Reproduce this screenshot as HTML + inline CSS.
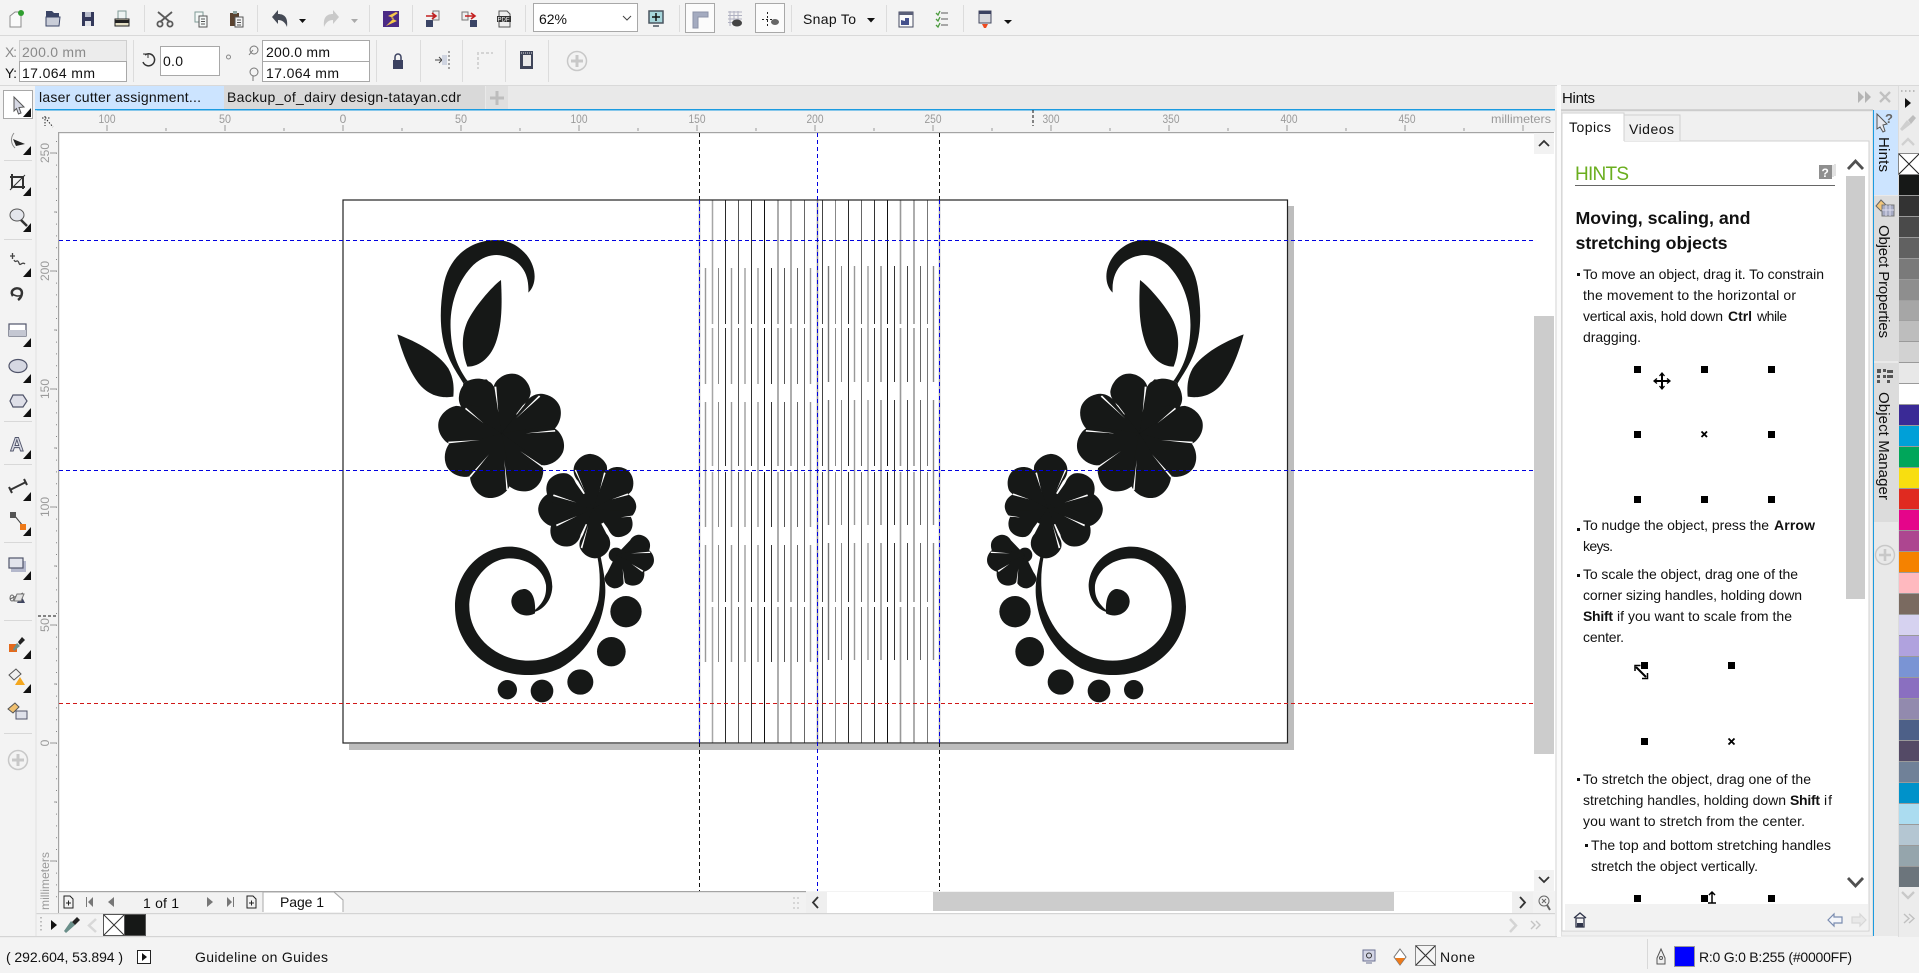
<!DOCTYPE html>
<html><head><meta charset="utf-8"><title>CorelDRAW</title>
<style>
html,body{margin:0;padding:0;background:#f3f3f3;width:1919px;height:973px;overflow:hidden}
svg{display:block;position:absolute;left:0;top:0}
text{font-family:"Liberation Sans",sans-serif;fill:#111;font-size:14px}
.r{font-size:12px;fill:#9a9a9a}
.b{font-weight:bold}
.ic{fill:none;stroke:#555a66;stroke-width:1.3}
</style></head><body>
<svg width="1919" height="973" viewBox="0 0 1919 973" xmlns="http://www.w3.org/2000/svg">
<defs>
<path id="pt" d="M0 0L100 -45C120 -62 150 -62 168 -46C188 -30 194 -8 192 8C188 32 170 52 148 60C125 64 112 52 100 45Z"/>
<g id="orn" fill="#161817">
 <g transform="translate(380 220) scale(.33333)">
  <path d="M445 218C470 195 472 145 440 105C405 65 370 60 345 60C270 62 205 110 190 200C178 270 178 350 205 410C220 445 235 465 250 490L262 482C235 445 215 400 212 330C208 250 235 180 280 135C305 112 330 105 350 105C400 108 450 140 445 218Z"/>
  <path d="M363 180C367 260 365 310 350 360C335 410 300 440 262 440C245 395 243 350 262 305C280 265 335 200 363 180Z"/>
  <path d="M52 343C110 365 175 400 205 445C222 475 222 505 220 530C190 535 150 530 120 495C90 460 65 395 52 343Z"/>
  <g transform="translate(365 640)">
   <circle r="72"/>
   <use href="#pt" transform="rotate(-77) scale(.95)"/>
   <use href="#pt" transform="rotate(-27)"/>
   <use href="#pt" transform="rotate(15)"/>
   <use href="#pt" transform="rotate(60)"/>
   <use href="#pt" transform="rotate(103) scale(1.03)"/>
   <use href="#pt" transform="rotate(147)"/>
   <use href="#pt" transform="rotate(189)"/>
   <use href="#pt" transform="rotate(-124) scale(.97)"/>
  </g>
  <path d="M250 490L245 525L262 555L300 560L340 500L320 478L262 482Z"/>
  <g fill="#fff">
   <path d="M355 578L343 500L349 500Z"/>
   <path d="M408 595L477 526L481 530Z"/>
   <path d="M437 640L525 630L526 635Z"/>
   <path d="M420 693L496 743L493 747Z"/>
   <path d="M373 720L379 810L384 810Z"/>
   <path d="M327 703L268 768L272 772Z"/>
   <path d="M300 660L205 665L205 670Z"/>
   <path d="M311 610L258 563L255 567Z"/>
  </g>
 </g>
 <g transform="translate(430 440) scale(.33333)">
  <g transform="translate(490 205)">
   <circle r="52"/>
   <use href="#pt" transform="rotate(-95) scale(.85)"/>
   <use href="#pt" transform="rotate(-47) scale(.8)"/>
   <use href="#pt" transform="rotate(-4) scale(.67)"/>
   <use href="#pt" transform="rotate(30) scale(.68)"/>
   <use href="#pt" transform="rotate(87) scale(.78)"/>
   <use href="#pt" transform="rotate(140) scale(.8)"/>
   <use href="#pt" transform="rotate(178) scale(.86)"/>
   <use href="#pt" transform="rotate(-149) scale(.82)"/>
  </g>
  <g fill="#fff">
   <path d="M465 155L434 91L438 89Z"/>
   <path d="M510 148L522 97L527 99Z"/>
   <path d="M545 178L593 160L595 165Z"/>
   <path d="M572 232L610 226L611 230Z"/>
   <path d="M518 255L548 311L553 308Z"/>
   <path d="M475 255L452 323L457 325Z"/>
   <path d="M441 228L378 254L380 259Z"/>
   <path d="M440 188L371 163L369 168Z"/>
  </g>
  <g transform="translate(558 345)">
   <circle r="22"/>
   <use href="#pt" transform="rotate(-22) scale(.56)"/>
   <use href="#pt" transform="rotate(10) scale(.6)"/>
   <use href="#pt" transform="rotate(48) scale(.58)"/>
   <use href="#pt" transform="rotate(92) scale(.52)"/>
  </g>
  <g fill="#fff">
   <path d="M603 340L660 335L661 339Z"/>
   <path d="M605 372L637 396L640 392Z"/>
   <path d="M578 385L582 445L587 444Z"/>
  </g>
  <path d="M502 350L512 350C522 400 530 440 524 480C515 560 470 640 390 685C345 705 300 708 260 703C160 690 75 610 75 500C75 400 150 320 240 320C310 320 367 375 367 440C365 490 330 515 305 518C340 490 350 470 348 435C340 385 290 355 240 355C175 355 118 420 118 500C118 590 200 662 295 662C400 662 480 580 505 480C512 430 510 390 502 350Z"/>
  <path d="M315 520C280 538 245 515 244 485C244 460 265 447 285 447C305 450 318 475 315 520Z"/>
  <circle cx="588" cy="515" r="47"/>
  <ellipse cx="544" cy="635" rx="43" ry="44"/>
  <ellipse cx="451" cy="726" rx="39" ry="38"/>
  <circle cx="336" cy="753" r="34"/>
  <circle cx="232" cy="749" r="29"/>
 </g>
</g>
</defs>

<rect width="1919" height="973" fill="#f3f3f3"/>
<!-- toolbar lines -->
<rect x="0" y="35" width="1919" height="1" fill="#d9d9d9"/>
<rect x="0" y="85" width="1919" height="1" fill="#d9d9d9"/>

<!-- top toolbar separators -->
<g fill="#dcdcdc">
<rect x="144" y="5" width="1" height="27"/><rect x="257" y="5" width="1" height="27"/><rect x="369" y="5" width="1" height="27"/><rect x="412" y="5" width="1" height="27"/><rect x="525" y="5" width="1" height="27"/><rect x="679" y="5" width="1" height="27"/><rect x="791" y="5" width="1" height="27"/><rect x="886" y="5" width="1" height="27"/><rect x="963" y="5" width="1" height="27"/>
<rect x="133" y="40" width="1" height="42"/><rect x="376" y="40" width="1" height="42"/><rect x="420" y="40" width="1" height="42"/><rect x="462" y="40" width="1" height="42"/><rect x="505" y="40" width="1" height="42"/><rect x="548" y="40" width="1" height="42"/>
</g>
<!-- new -->
<g transform="translate(16 19)"><path d="M-6 -3L-1 -7H5V8H-6Z" fill="#fafafa" stroke="#8c8c8c"/><circle cx="5" cy="-6" r="3" fill="#2f9e2f"/></g>
<!-- open -->
<g transform="translate(53 19)"><path d="M-7 -8H-1L1 -6H6V-2H-7Z" fill="#3b4566"/><path d="M-7 -2H7L6 7H-7Z" fill="#c9cdd8" stroke="#3b4566"/></g>
<!-- save -->
<g transform="translate(88 19)"><path d="M-6 -7H6V7H-6Z" fill="#33385a"/><rect x="-3" y="-7" width="6" height="5" fill="#b9bdcc"/><rect x="-3" y="2" width="6" height="5" fill="#dfe1e8"/></g>
<!-- print -->
<g transform="translate(122 19)"><rect x="-4" y="-8" width="8" height="8" fill="#eef3f2" stroke="#7f9a96"/><rect x="-7" y="0" width="14" height="7" fill="#e4dfc4" stroke="#222"/><rect x="-7" y="1" width="14" height="3" fill="#222"/></g>
<!-- cut -->
<g transform="translate(165 19)" fill="none" stroke="#5a5a5a" stroke-width="1.8"><path d="M-7 -7L5 3M7 -7L-5 3"/><circle cx="-5" cy="5" r="2.6"/><circle cx="5" cy="5" r="2.6"/></g>
<!-- copy -->
<g transform="translate(201 19)" stroke="#7e9a95" fill="#f4f8f7"><rect x="-6" y="-7" width="8" height="10"/><rect x="-2" y="-3" width="8" height="11" stroke="#555"/><path d="M0 0H4M0 2.500H4M0 5H4" stroke="#555"/></g>
<!-- paste -->
<g transform="translate(236 19)"><rect x="-6" y="-6" width="9" height="13" fill="#5b4330"/><rect x="-3" y="-8" width="4" height="3" fill="#8fa39f"/><rect x="-1" y="-2" width="8" height="10" fill="#f4f4f4" stroke="#555"/><path d="M1 1H5M1 3.500H5M1 6H5" stroke="#555"/></g>
<!-- undo redo -->
<g transform="translate(280 19)" fill="#454a55"><path d="M-8 -2L-2 -9V-5C5 -5 8 -1 7 8C5 3 2 1 -2 1V5Z"/></g>
<path d="M299 19H306L302.500 23Z" fill="#111"/>
<g transform="translate(331 19) scale(-1 1)" fill="#c9c9c9"><path d="M-8 -2L-2 -9V-5C5 -5 8 -1 7 8C5 3 2 1 -2 1V5Z"/></g>
<path d="M351 19H358L354.500 23Z" fill="#aaa"/>
<!-- purple -->
<rect x="383" y="11" width="16" height="16" fill="#4b2a85"/><path d="M396 12L388 16L394 18L386 26L397 21L391 18L398 13Z" fill="#f5c84b"/>
<!-- import/export/pdf -->
<g transform="translate(433 19)"><rect x="-7" y="1" width="7" height="7" fill="#3b4566"/><path d="M0 -8H6V1H0Z" fill="#eee" stroke="#777"/><path d="M-7 -3H2M-1 -6L3 -3L-1 0" stroke="#c31f1f" stroke-width="1.600" fill="none"/></g>
<g transform="translate(469 19)"><path d="M-7 -7H-1V1H-7Z" fill="#eee" stroke="#777"/><rect x="1" y="1" width="7" height="7" fill="#3b4566"/><path d="M-4 -3H5M2 -6L6 -3L2 0" stroke="#c31f1f" stroke-width="1.600" fill="none"/></g>
<g transform="translate(504 19)"><path d="M-5 -8H3L6 -5V8H-5Z" fill="#eee" stroke="#555"/><rect x="-7" y="-3" width="14" height="6" fill="#333"/><text x="-6.500" y="2.500" style="font-size:6px;fill:#fff">PDF</text></g>
<!-- zoom box -->
<rect x="533.500" y="3.500" width="104" height="28" fill="#fff" stroke="#a8a8a8"/>
<text x="539" y="24" textLength="28">62%</text>
<path d="M623 16L627 20L631 16" fill="none" stroke="#444"/>
<!-- monitor -->
<g transform="translate(656 18)"><rect x="-7" y="-7" width="14" height="12" fill="#a7d6db" stroke="#4a5560" stroke-width="1.500"/><path d="M-3 8H3" stroke="#4a5560" stroke-width="1.500"/><path d="M-4 -1H4M0 -5V3" stroke="#111" stroke-width="1.500"/></g>
<!-- toggles -->
<rect x="685.500" y="3.500" width="29" height="29" fill="#fbfbfb" stroke="#a8a8a8"/>
<path d="M693 12H708V17H698V28H693Z" fill="#a4abc0" stroke="#8c93a8"/>
<g transform="translate(735 19)"><path d="M-7 -7H7M-7 -3.500H7M-7 0H7M-7 3.500H7M-5 -8V7M-1 -8V7M3 -8V7" stroke="#b0b2c2" fill="none"/><ellipse cx="2" cy="4" rx="5" ry="3.500" fill="#444"/></g>
<rect x="755.500" y="3.500" width="29" height="29" fill="#fbfbfb" stroke="#a8a8a8"/>
<path d="M762 19.500H773M767.500 12V28" stroke="#222" stroke-dasharray="2 2" fill="none"/><ellipse cx="775" cy="22" rx="4" ry="3" fill="#666"/>
<text x="803" y="24" textLength="53">Snap To</text>
<path d="M867 18H875L871 22.500Z" fill="#111"/>
<g transform="translate(906 19)"><rect x="-7" y="-7" width="14" height="15" fill="#fafafa" stroke="#444a60"/><rect x="-7" y="-7" width="14" height="3" fill="#5a5f78"/><path d="M-5 6V1L-1 2V-1H3V6Z" fill="#44508c"/></g>
<g transform="translate(942 19)" fill="none" stroke="#7a7a7a" stroke-width="1.300"><path d="M-1 -6H6M-1 0H6M-1 6H6"/><path d="M-6 -6L-4 -4L-2 -8M-6 0L-4 2L-2 -2M-6 6L-4 8L-2 4" stroke="#4c9b3e"/></g>
<g transform="translate(985 18)"><rect x="-6" y="-7" width="12" height="12" fill="#d8d8dc" stroke="#444a60"/><rect x="-6" y="-7" width="12" height="3" fill="#3b4160"/><path d="M-3 6H3L1 10H-1Z" fill="#ee4a20"/></g>
<path d="M1004 20H1012L1008 24Z" fill="#111"/>

<!-- property bar -->
<text x="5" y="57" style="fill:#8a8a8a" textLength="12">X:</text>
<text x="5" y="78" textLength="12">Y:</text>
<rect x="19.500" y="40.500" width="107" height="21" fill="#ececec" stroke="#cfcfcf"/>
<rect x="19.500" y="61.500" width="107" height="20" fill="#fff" stroke="#a8a8a8"/>
<text x="22" y="57" style="fill:#8a8a8a" textLength="64">200.0 mm</text>
<text x="22" y="78" textLength="73">17.064 mm</text>
<g transform="translate(149 60)" fill="none" stroke="#333" stroke-width="1.500"><path d="M-4 -5A6 6 0 1 1 -6 2"/><path d="M-6 -6H-1V-2" stroke-width="1"/></g>
<rect x="160.500" y="46.500" width="59" height="29" fill="#fff" stroke="#a8a8a8"/>
<text x="163" y="66" textLength="20">0.0</text>
<circle cx="228.500" cy="57" r="2" fill="none" stroke="#888"/>
<g fill="none" stroke="#777"><circle cx="254" cy="50" r="4"/><path d="M249 55L253 50"/><circle cx="254" cy="72" r="4"/><path d="M253 76V81"/></g>
<rect x="262.500" y="40.500" width="107" height="21" fill="#fff" stroke="#a8a8a8"/>
<rect x="262.500" y="61.500" width="107" height="20" fill="#fff" stroke="#a8a8a8"/>
<text x="266" y="57" textLength="64">200.0 mm</text>
<text x="266" y="78" textLength="73">17.064 mm</text>
<g transform="translate(398 62)"><rect x="-5" y="-2" width="10" height="9" fill="#3b4160"/><path d="M-3 -2V-5A3 3 0 0 1 3 -5V-2" fill="none" stroke="#3b4160" stroke-width="1.500"/></g>
<g transform="translate(443 60)"><path d="M-8 0H-1M-4 -3L-1 0L-4 3" stroke="#444" fill="none"/><rect x="-1" y="-5" width="5" height="10" fill="#cfd4e0"/><path d="M6 -9V9" stroke="#555" stroke-dasharray="2 2"/></g>
<g transform="translate(484 60)" fill="none" stroke="#c9c9c9" stroke-width="1.500"><path d="M-6 -8V9M-3 -7H9" stroke-dasharray="3 2"/></g>
<g transform="translate(527 60)"><rect x="-7" y="-9" width="13" height="18" fill="#3f4559"/><rect x="-4" y="-5" width="8" height="11" fill="#e9e9e9"/><path d="M-6 -7H5" stroke="#ddd" stroke-dasharray="1 1"/></g>
<g transform="translate(577 61)" fill="none" stroke="#c8c8c8" stroke-width="1.500"><circle r="9.500"/><path d="M-6 0H6M0 -6V6" stroke-width="3"/></g>

<!-- tabs -->
<rect x="35" y="86" width="1520" height="23" fill="#e9e9e9"/>
<rect x="35" y="86" width="189" height="23" fill="#cce4ff"/>
<rect x="224" y="86" width="261" height="23" fill="#d9d9d9"/>
<rect x="486" y="86" width="22" height="23" fill="#dfdfdf"/>
<path d="M497 91V105M490 98H504" stroke="#bdbdbd" stroke-width="3"/>
<text x="39" y="102" textLength="162">laser cutter assignment...</text>
<text x="227" y="102" textLength="234">Backup_of_dairy design-tatayan.cdr</text>
<rect x="35" y="109" width="1520" height="1.500" fill="#1b9be0"/>

<!-- canvas -->
<rect x="59" y="132" width="1496" height="759" fill="#fff"/>
<rect x="58" y="132" width="1.200" height="781" fill="#a4a4a4"/>
<rect x="58" y="132" width="1496" height="1.200" fill="#a4a4a4"/>

<!-- rulers -->
<path d="M107 125V131M225 125V131M343 125V131M461 125V131M579 125V131M697 125V131M815 125V131M933 125V131M1051 125V131M1169 125V131M1287 125V131M1405 125V131M1523 125V131M166 128V131M284 128V131M402 128V131M520 128V131M638 128V131M756 128V131M874 128V131M992 128V131M1110 128V131M1228 128V131M1346 128V131M1464 128V131" stroke="#999" fill="none"/>
<g class="r" text-anchor="middle">
<text class="r" x="107" y="123" textLength="17" lengthAdjust="spacingAndGlyphs">100</text>
<text class="r" x="225" y="123" textLength="12" lengthAdjust="spacingAndGlyphs">50</text>
<text class="r" x="343" y="123">0</text>
<text class="r" x="461" y="123" textLength="12" lengthAdjust="spacingAndGlyphs">50</text>
<text class="r" x="579" y="123" textLength="17" lengthAdjust="spacingAndGlyphs">100</text>
<text class="r" x="697" y="123" textLength="17" lengthAdjust="spacingAndGlyphs">150</text>
<text class="r" x="815" y="123" textLength="17" lengthAdjust="spacingAndGlyphs">200</text>
<text class="r" x="933" y="123" textLength="17" lengthAdjust="spacingAndGlyphs">250</text>
<text class="r" x="1051" y="123" textLength="17" lengthAdjust="spacingAndGlyphs">300</text>
<text class="r" x="1171" y="123" textLength="17" lengthAdjust="spacingAndGlyphs">350</text>
<text class="r" x="1289" y="123" textLength="17" lengthAdjust="spacingAndGlyphs">400</text>
<text class="r" x="1407" y="123" textLength="17" lengthAdjust="spacingAndGlyphs">450</text>
<text class="r" x="1521" y="123" textLength="60" lengthAdjust="spacingAndGlyphs">millimeters</text>
</g>
<path d="M1033 110V126" stroke="#111" stroke-dasharray="3 2"/>
<path d="M38 616H58" stroke="#111" stroke-dasharray="3 2"/>
<g transform="translate(48 122)" stroke="#222" stroke-dasharray="1.500 1.500" fill="none"><path d="M-6 -4H3M-3 -6V4"/><path d="M-1 -2L5 5"/></g>
<path d="M50 153H57M50 271H57M50 389H57M50 507H57M50 625H57M50 743H57M50 861H57M54 212H57M54 330H57M54 448H57M54 566H57M54 684H57M54 802H57" stroke="#999" fill="none"/>
<path d="M56.500 141V905" stroke="#888" stroke-dasharray="1 10.800" fill="none"/>
<text class="r" transform="rotate(-90 49 153)" x="49" y="153" text-anchor="middle" textLength="20" lengthAdjust="spacingAndGlyphs">250</text>
<text class="r" transform="rotate(-90 49 271)" x="49" y="271" text-anchor="middle" textLength="20" lengthAdjust="spacingAndGlyphs">200</text>
<text class="r" transform="rotate(-90 49 389)" x="49" y="389" text-anchor="middle" textLength="20" lengthAdjust="spacingAndGlyphs">150</text>
<text class="r" transform="rotate(-90 49 507)" x="49" y="507" text-anchor="middle" textLength="20" lengthAdjust="spacingAndGlyphs">100</text>
<text class="r" transform="rotate(-90 49 625)" x="49" y="625" text-anchor="middle" textLength="14" lengthAdjust="spacingAndGlyphs">50</text>
<text class="r" transform="rotate(-90 49 743)" x="49" y="743" text-anchor="middle">0</text>
<text class="r" transform="rotate(-90 49 881)" x="49" y="881" text-anchor="middle" textLength="58" lengthAdjust="spacingAndGlyphs">millimeters</text>

<!-- page -->
<rect x="1288" y="206" width="6" height="544" fill="#bdbdbd"/>
<rect x="349" y="744" width="945" height="6" fill="#bdbdbd"/>
<rect x="343" y="200" width="944" height="543" fill="#fff"/>

<!-- vertical cut lines -->
<g fill="none" stroke-width="1">
<g stroke-dasharray="124 4 138 6 130 5 136">
<path d="M712.500 200V743" stroke="#a6a6a6" stroke-width="1.500"/><path d="M725.500 200V743" stroke="#2a2a2a"/><path d="M738.500 200V743" stroke="#555"/><path d="M751.500 200V743" stroke="#333"/><path d="M764.500 200V743" stroke="#111"/><path d="M778 200V743" stroke="#999" stroke-width="1.600"/><path d="M791 200V743" stroke="#999" stroke-width="1.600"/><path d="M804.500 200V743" stroke="#666"/>
<path d="M822.500 200V743" stroke="#444"/><path d="M835.500 200V743" stroke="#888"/><path d="M848.500 200V743" stroke="#2a2a2a"/><path d="M861.500 200V743" stroke="#666"/><path d="M874.500 200V743" stroke="#333"/><path d="M887.500 200V743" stroke="#111"/><path d="M900.500 200V743" stroke="#999" stroke-width="1.600"/><path d="M914 200V743" stroke="#999" stroke-width="1.600"/><path d="M927.500 200V743" stroke="#777"/>
</g>
<g stroke-dasharray="116 18 125 18 117" >
<path d="M705.500 268V662" stroke="#999" stroke-width="1.400"/><path d="M718.500 268V662" stroke="#888"/><path d="M731.500 268V662" stroke="#999" stroke-width="1.400"/><path d="M745 268V662" stroke="#777"/><path d="M758 268V662" stroke="#999" stroke-width="1.400"/><path d="M771.500 268V662" stroke="#333"/><path d="M784.500 268V662" stroke="#555"/><path d="M797.500 268V662" stroke="#666"/><path d="M810.500 268V662" stroke="#999" stroke-width="1.400"/>
</g>
<g stroke-dasharray="116 18 125 18 117">
<path d="M828.500 266V660" stroke="#777" stroke-width="1.400"/><path d="M841.500 266V660" stroke="#888"/><path d="M854.500 266V660" stroke="#999" stroke-width="1.400"/><path d="M868 266V660" stroke="#777"/><path d="M881 266V660" stroke="#888" stroke-width="1.400"/><path d="M894.500 266V660" stroke="#333"/><path d="M907.500 266V660" stroke="#444"/><path d="M920.500 266V660" stroke="#666"/><path d="M933.500 266V660" stroke="#888" stroke-width="1.400"/>
</g>
<path d="M699.500 200V743" stroke="#aaa" stroke-width="1.500"/>
<path d="M817.500 200V743" stroke="#999" stroke-width="1.500"/>
<path d="M939.500 200V743" stroke="#aaa" stroke-width="1.500"/>
</g>
<rect x="343" y="200" width="944.500" height="543" fill="none" stroke="#222" stroke-width="1.200"/>

<use href="#orn"/>
<use href="#orn" transform="translate(1641 0) scale(-1 1)"/>

<!-- guides -->
<g fill="none" stroke-dasharray="4 3">
<path d="M59 240.500H1534" stroke="#0000e0"/>
<path d="M59 470.500H1534" stroke="#0000e0"/>
<path d="M59 703.500H1534" stroke="#d01818"/>
<path d="M699.500 133V200" stroke="#111"/><path d="M699.500 200V743" stroke="#0000e0"/><path d="M699.500 743V891" stroke="#111"/>
<path d="M817.500 133V891" stroke="#0000e0"/>
<path d="M939.500 133V200" stroke="#111"/><path d="M939.500 200V743" stroke="#0000e0"/><path d="M939.500 743V891" stroke="#111"/>
</g>

<!-- canvas scrollbars -->
<rect x="1534" y="133" width="20" height="758" fill="#fff"/>
<rect x="1534" y="133" width="20" height="21" fill="#f2f2f2"/>
<path d="M1539 146L1544 141L1549 146" fill="none" stroke="#333" stroke-width="1.800"/>
<rect x="1534" y="316" width="20" height="438" fill="#ccc"/>
<rect x="1534" y="870" width="20" height="21" fill="#f2f2f2"/>
<path d="M1539 877L1544 882L1549 877" fill="none" stroke="#333" stroke-width="1.800"/>
<!-- page nav row -->
<rect x="59" y="892" width="1495" height="21" fill="#f2f2f2"/>
<rect x="58" y="891" width="748" height="1.200" fill="#a4a4a4"/>
<rect x="827" y="892" width="685" height="21" fill="#fff"/>
<rect x="933" y="892" width="461" height="19" fill="#ccc"/>
<path d="M263 912V892H334L343 900V912" fill="#fff" stroke="#aaa"/>
<path d="M334 892L343 900" stroke="#aaa"/>
<text x="280" y="907" textLength="44">Page 1</text>
<text x="143" y="908" textLength="36">1 of 1</text>
<g fill="none" stroke="#222">
<path d="M64 896H70L73 899V908H64ZM66 903H71M68.500 900.500V905.500"/>
<path d="M247 896H253L256 899V908H247ZM249 903H254M251.500 900.500V905.500"/>
</g>
<g fill="#777">
<path d="M86 897V907H87V897ZM93 897V907L88 902Z"/>
<path d="M114 897V907L108 902Z"/>
<path d="M207 897V907L213 902Z"/>
<path d="M227 897V907L232 902ZM233 897V907H234V897Z"/>
</g>
<path d="M794 897v14M798 897v14" stroke="#bbb" stroke-dasharray="2 3"/>
<rect x="806" y="892" width="21" height="21" fill="#efefef"/>
<path d="M818 897L813 902.500L818 908" fill="none" stroke="#333" stroke-width="1.800"/>
<rect x="1512" y="892" width="21" height="21" fill="#efefef"/>
<path d="M1520 897L1525 902.500L1520 908" fill="none" stroke="#333" stroke-width="1.800"/>
<g transform="translate(1544 902)" fill="none" stroke="#666"><circle cy="-1" r="5"/><path d="M3 3L6 8" stroke-width="2"/><path d="M-2 -3L2 1M2 -3L-2 1"/></g>

<!-- colour bar -->
<rect x="36" y="913" width="1519" height="1.200" fill="#d4d4d4"/>
<rect x="0" y="936" width="1561" height="1.200" fill="#d4d4d4"/>
<rect x="35.500" y="110" width="1" height="826" fill="#e2e2e2"/>
<path d="M41 917V933" stroke="#aaa" stroke-dasharray="1.500 2.500" stroke-width="1.500"/>
<path d="M51 920V930L57 925Z" fill="#111"/>
<g transform="translate(72 925)"><path d="M-1 -4L3 0L-6 8L-8 6Z" fill="#6a8f8a"/><path d="M0 -3L5 -8L8 -5L3 0Z" fill="#222"/></g>
<path d="M96 919L89 925.500L96 932" fill="none" stroke="#d8d8d8" stroke-width="2.500"/>
<rect x="103.500" y="914.500" width="21" height="21" fill="#fff" stroke="#555"/>
<path d="M104 915L124 935M124 915L104 935" stroke="#333"/>
<rect x="124.500" y="914.500" width="21" height="21" fill="#161817" stroke="#555"/>
<path d="M1510 919L1516 925.500L1510 932" fill="none" stroke="#d4d4d4" stroke-width="2.500"/>
<path d="M1531 921L1535 925L1531 929M1536 921L1540 925L1536 929" fill="none" stroke="#c4c4c4" stroke-width="1.400"/>

<!-- toolbox -->
<rect x="3.500" y="90.500" width="29" height="28" fill="#fff" stroke="#a8a8a8"/>
<g fill="#d8d8d8"><rect x="4" y="160" width="28" height="1"/><rect x="4" y="239" width="28" height="1"/><rect x="4" y="421" width="28" height="1"/><rect x="4" y="464" width="28" height="1"/><rect x="4" y="542" width="28" height="1"/><rect x="4" y="620" width="28" height="1"/><rect x="4" y="733" width="28" height="1"/></g>
<g fill="#111"><path d="M31 108V117H23Z"/><path d="M31 146V155H23Z"/><path d="M31 187V196H23Z"/><path d="M31 223V232H23Z"/><path d="M31 268V277H23Z"/><path d="M31 338V347H23Z"/><path d="M31 374V383H23Z"/><path d="M31 408V417H23Z"/><path d="M31 450V459H23Z"/><path d="M31 492V501H23Z"/><path d="M31 527V536H23Z"/><path d="M31 571V580H23Z"/><path d="M31 650V659H23Z"/><path d="M31 684V693H23Z"/></g>
<path d="M14 97L24 107L19 107.500L21 113L18.500 114L16.500 108.500L14 111Z" fill="#d6d8e4" stroke="#555"/>
<g transform="translate(17 141)"><path d="M-3 -8C-7 -3 -6 3 -2 7" fill="none" stroke="#8a8a8a"/><path d="M-4 -2L8 3L-1 5Z" fill="#222"/></g>
<g transform="translate(17 182)" stroke="#333" fill="none"><path d="M-7 -5H6V7" stroke-width="2"/><path d="M-5 -8V5H8" stroke-width="2"/><path d="M-7 8L8 -7"/></g>
<g transform="translate(17 217)"><ellipse cy="-2" rx="7" ry="6" fill="#e4e6ec" stroke="#555"/><path d="M4 3L10 9" stroke="#333" stroke-width="2.500"/></g>
<g transform="translate(17 261)" fill="none" stroke="#444" stroke-width="1.300"><path d="M-7 -5H-2M-4.500 -8V-2"/><path d="M-3 -1C-1 3 0 -3 2 2C3 6 5 0 8 3"/></g>
<path d="M13 296C9 290 16 287 20 289C24 292 21 298 18 300" fill="none" stroke="#333" stroke-width="2.500"/><path d="M11 293C15 296 18 297 22 295" fill="none" stroke="#333" stroke-width="1.500"/>
<g transform="translate(18 330)"><rect x="-9" y="-6" width="17" height="12" fill="#fff" stroke="#50546a" stroke-width="1.200"/><rect x="-9" y="0" width="17" height="6" fill="#c4c7d2"/></g>
<g transform="translate(18 366)"><ellipse rx="9" ry="6.500" fill="#d6d8e2" stroke="#50546a" stroke-width="1.200"/></g>
<path d="M10 401L13 395H23L27 401L23 407H13Z" fill="#dedfe8" stroke="#50546a" stroke-width="1.200"/>
<text x="10" y="451" class="b" style="font-size:19px;fill:#d8dae4;stroke:#50546a;stroke-width:.9">A</text>
<g transform="translate(18 486)"><path d="M-8 4L8 -4" stroke="#333" stroke-width="2"/><path d="M-9 1L-6 7M6 -7L9 -1" stroke="#333" stroke-width="2"/></g>
<g transform="translate(18 521)"><path d="M-4 -6L5 5" stroke="#444"/><rect x="-8" y="-9" width="6" height="6" fill="#555"/><rect x="2" y="3" width="6" height="6" fill="#ee7a1a"/></g>
<g transform="translate(18 565)"><rect x="-7" y="-4" width="15" height="11" fill="#b4b8cc"/><rect x="-9" y="-7" width="14" height="10" fill="#e2e4ec" stroke="#50546a" stroke-width="1.200"/></g>
<g transform="translate(18 600)"><path d="M-1 3L7 3L3 -5Z" fill="#3f4560"/><path d="M-8 -1L5 -7" stroke="#666"/><ellipse cx="-6" cy="-2" rx="2" ry="3" fill="none" stroke="#666"/><path d="M-4 1L-1 -6H6L3 1Z" fill="#e2e2e2" stroke="#777"/></g>
<g transform="translate(17 643)"><rect x="-8" y="1" width="8" height="8" fill="#e46a1c"/><path d="M0 0L3 3L-3 8L-4 6Z" fill="#6c8f8a"/><path d="M1 -1L5 -6L8 -3L3 2Z" fill="#222"/></g>
<g transform="translate(17 677)"><path d="M-1 -8L-8 -2L-3 3L4 -3Z" fill="#f0f0f0" stroke="#555"/><path d="M-2 8L3 0L8 8Z" fill="#f4a71e"/></g>
<g transform="translate(17 711)"><path d="M-2 -8L-9 -2L-4 2L2 -4Z" fill="#f0c070" stroke="#555"/><rect x="-1" y="0" width="11" height="8" fill="#dfe1ea" stroke="#50546a"/></g>
<g transform="translate(18 760)" fill="none" stroke="#c8c8c8" stroke-width="1.500"><circle r="9.500"/><path d="M-6 0H6M0 -6V6" stroke-width="3"/></g>

<!-- status bar -->
<text x="6" y="962" textLength="117">( 292.604, 53.894 )</text>
<rect x="137.500" y="950.500" width="13" height="13" fill="#fff" stroke="#222"/><path d="M142 953V961L147 957Z" fill="#111"/>
<text x="195" y="962" textLength="133">Guideline on Guides</text>
<g transform="translate(1369 957)"><rect x="-6" y="-7" width="12" height="11" fill="#d4d6e6" stroke="#6a6f90"/><circle cy="-1.500" r="2.500" fill="none" stroke="#333"/><path d="M-3 6H3" stroke="#6a6f90"/></g>
<g transform="translate(1400 957)"><path d="M0 -8L6 0L0 8L-6 0Z" fill="#fff" stroke="#777"/><path d="M-5 1H5L0 8Z" fill="#ee7a1a"/></g>
<rect x="1415.500" y="945.500" width="20" height="20" fill="#f4f4f4" stroke="#888"/><path d="M1416 946L1435 965M1435 946L1416 965" stroke="#333" stroke-width="1.200"/>
<text x="1440" y="962" textLength="35">None</text>
<rect x="1647" y="939" width="1" height="30" fill="#d8d8d8"/>
<g transform="translate(1661 957)" fill="none" stroke="#555"><path d="M-4 7H4V1L0 -8L-4 1Z" fill="#eee"/><circle cy="1" r="1.500"/></g>
<rect x="1674.500" y="946.500" width="20" height="20" fill="#0000ff" stroke="#9a9a9a"/>
<text x="1699" y="962" textLength="153">R:0 G:0 B:255 (#0000FF)</text>

<!-- hints panel -->
<rect x="1555" y="110" width="2" height="826" fill="#e8e8e8"/>
<rect x="1557" y="85" width="4" height="852" fill="#fbfbfb"/>
<rect x="1561" y="86" width="337" height="24" fill="#ebebeb"/>
<rect x="1561" y="109.500" width="312" height="1" fill="#b8b8b8"/>
<text x="1562" y="103" style="font-size:15px" textLength="33">Hints</text>
<path d="M1858 91V103L1864 97ZM1865 91V103L1871 97Z" fill="#b4b4b4"/>
<path d="M1880 92L1890 102M1890 92L1880 102" stroke="#c0c0c0" stroke-width="2.300"/>
<rect x="1561.500" y="111" width="311" height="825" fill="#f0f0f0" stroke="#e0e0e0"/>
<rect x="1562" y="141" width="307" height="790" fill="#fff" stroke="#d0d0d0"/>
<rect x="1562" y="113" width="62" height="30" fill="#fff"/>
<path d="M1562 143V113H1624V141" fill="none" stroke="#d0d0d0"/>
<path d="M1624 141V115H1680V141" fill="#f0f0f0" stroke="#d0d0d0"/>
<text x="1569" y="132" textLength="42">Topics</text>
<text x="1629" y="134" textLength="45">Videos</text>
<!-- hints scrollbar -->
<rect x="1845" y="142" width="23" height="762" fill="#fff"/>
<rect x="1846" y="176" width="19" height="423" fill="#ccc"/>
<path d="M1848 169L1855.500 161L1863 169" fill="none" stroke="#505050" stroke-width="2.800"/>
<path d="M1848 878L1855.500 886L1863 878" fill="none" stroke="#505050" stroke-width="2.800"/>
<!-- hints content -->
<text x="1575" y="180" style="font-size:19px;fill:#6aae1e" textLength="54">HINTS</text>
<rect x="1575" y="185" width="260" height="1" fill="#666"/>
<rect x="1819" y="165" width="13" height="14" fill="#8f8f8f"/><path d="M1833 165V177M1835 164V176" stroke="#c4c4c4"/>
<text x="1821.500" y="177" style="font-size:12px;fill:#fff;font-weight:bold">?</text>
<text x="1575.500" y="224" class="b" style="font-size:17.8px" textLength="175">Moving, scaling, and</text>
<text x="1575.500" y="249" class="b" style="font-size:17.8px" textLength="152">stretching objects</text>

<g fill="#111">
<rect x="1577" y="273" width="3" height="3"/><rect x="1577" y="528" width="3" height="3"/><rect x="1577" y="574" width="3" height="3"/><rect x="1577" y="778" width="3" height="3"/><rect x="1585" y="844" width="3" height="3"/>
</g>
<text x="1583" y="279" textLength="241">To move an object, drag it. To constrain</text>
<text x="1583" y="300" textLength="213">the movement to the horizontal or</text>
<text x="1583" y="321" textLength="140">vertical axis, hold down</text>
<text x="1728" y="321" class="b" textLength="24">Ctrl</text>
<text x="1757" y="321" textLength="30">while</text>
<text x="1583" y="342" textLength="58">dragging.</text>
<g fill="#000">
<rect x="1634" y="366" width="7" height="7"/><rect x="1701" y="366" width="7" height="7"/><rect x="1768" y="366" width="7" height="7"/>
<rect x="1634" y="431" width="7" height="7"/><rect x="1768" y="431" width="7" height="7"/>
<rect x="1634" y="496" width="7" height="7"/><rect x="1701" y="496" width="7" height="7"/><rect x="1768" y="496" width="7" height="7"/>
</g>
<path d="M1701.500 431.500L1707 437M1707 431.500L1701.500 437" stroke="#000" stroke-width="1.800"/>
<path d="M1662 374V388M1655 381H1669" stroke="#000" stroke-width="2"/><path d="M1659.500 376L1662 373L1664.500 376M1659.500 386L1662 389L1664.500 386M1657 378.500L1654 381L1657 383.500M1667 378.500L1670 381L1667 383.500" fill="none" stroke="#000" stroke-width="1.300"/>

<text x="1583" y="530" textLength="186">To nudge the object, press the</text>
<text x="1774" y="530" class="b" textLength="41">Arrow</text>
<text x="1583" y="551" textLength="30">keys.</text>
<text x="1583" y="579" textLength="215">To scale the object, drag one of the</text>
<text x="1583" y="600" textLength="219">corner sizing handles, holding down</text>
<text x="1583" y="621" class="b" textLength="30">Shift</text>
<text x="1617" y="621" textLength="175">if you want to scale from the</text>
<text x="1583" y="642" textLength="41">center.</text>
<g fill="#000"><rect x="1641" y="662" width="7" height="7"/><rect x="1728" y="662" width="7" height="7"/><rect x="1641" y="738" width="7" height="7"/></g>
<path d="M1728.500 738.500L1734.500 744.500M1734.500 738.500L1728.500 744.500" stroke="#000" stroke-width="1.800"/>
<path d="M1636 667L1646 677" stroke="#000" stroke-width="2"/><path d="M1635 671V665.500H1640.500M1647.500 673V678.500H1642" fill="none" stroke="#000" stroke-width="1.500"/>
<text x="1583" y="784" textLength="228">To stretch the object, drag one of the</text>
<text x="1583" y="805" textLength="203">stretching handles, holding down</text>
<text x="1790" y="805" class="b" textLength="30">Shift</text>
<text x="1824" y="805" textLength="8">if</text>
<text x="1583" y="826" textLength="222">you want to stretch from the center.</text>
<text x="1591" y="850" textLength="240">The top and bottom stretching handles</text>
<text x="1591" y="871" textLength="167">stretch the object vertically.</text>
<g fill="#000"><rect x="1634" y="895" width="7" height="7"/><rect x="1701" y="895" width="7" height="7"/><rect x="1768" y="895" width="7" height="7"/></g>
<path d="M1712 892V903M1708 903H1716M1709 895L1712 892L1715 895" fill="none" stroke="#000" stroke-width="1.500"/>
<!-- hints footer -->
<rect x="1565" y="904" width="303" height="26" fill="#f2f2f2"/>
<path d="M1574 918L1580 913L1586 918M1576 918V927H1584V918Z" fill="#f4f4f4" stroke="#30354a" stroke-width="1.300"/><rect x="1577" y="923" width="6" height="4" fill="#30354a"/>
<path d="M1828 920L1834 914V917H1842V923H1834V926Z" fill="#f4f6fa" stroke="#7a8cb0" stroke-width="1.200"/>
<path d="M1866 920L1860 914V917H1852V923H1860V926Z" fill="#e8e8e8" stroke="#d8d8d8" stroke-width="1.200"/>

<!-- docker tabs -->
<rect x="1873" y="110" width="1.300" height="826" fill="#1b9be0"/>
<rect x="1874" y="110" width="24" height="826" fill="#e9e9e9"/>
<rect x="1874" y="110" width="24" height="85" fill="#cce4ff"/>
<rect x="1874" y="196" width="24" height="165" fill="#dcdcdc"/>
<rect x="1874" y="363" width="24" height="159" fill="#dcdcdc"/>
<path d="M1877 114L1887 124L1883 125L1885 131L1883 132L1880 127L1877 129Z" fill="#e6e8f0" stroke="#555"/>
<text x="1885" y="123" class="b" style="font-size:13px;fill:#666">?</text>
<text x="1879" y="137" transform="rotate(90 1879 137)" style="font-size:15px" textLength="35">Hints</text>
<g transform="translate(1885 209)"><path d="M-4 -9L-9 -3L-4 2L2 -3Z" fill="#f2c67a" stroke="#666"/><rect x="-3" y="-4" width="12" height="11" fill="#a6abc4" stroke="#777"/><path d="M1 -4V7M5 -4V7M-3 1H9" stroke="#dde"/></g>
<text x="1879" y="225" transform="rotate(90 1879 225)" style="font-size:15px" textLength="113">Object Properties</text>
<g transform="translate(1885 377)" fill="#555"><rect x="-8" y="-8" width="4" height="4"/><rect x="-2" y="-8" width="3" height="3"/><rect x="2" y="-7" width="6" height="3"/><rect x="-8" y="-2" width="3" height="3"/><rect x="-2" y="-2" width="3" height="3"/><rect x="2" y="-2" width="6" height="3"/><rect x="-8" y="3" width="3" height="3"/><rect x="2" y="3" width="3" height="3"/></g>
<text x="1879" y="392" transform="rotate(90 1879 392)" style="font-size:15px" textLength="108">Object Manager</text>
<g transform="translate(1885 555)" fill="none" stroke="#c8c8c8" stroke-width="1.400"><circle r="9.500"/><path d="M-6 0H6M0 -6V6" stroke-width="2.600"/></g>

<!-- palette -->
<rect x="1898" y="86" width="21" height="851" fill="#ececec"/>
<rect x="1898" y="86" width="1" height="851" fill="#dcdcdc"/>
<path d="M1901 91H1917" stroke="#aaa" stroke-dasharray="1.500 2.500" stroke-width="1.500"/>
<path d="M1905 98V108L1911 103Z" fill="#111"/>
<g transform="translate(1908 123)"><path d="M-1 -3L3 1L-6 8L-8 6Z" fill="#cfcfcf"/><path d="M0 -3L5 -8L8 -5L3 1Z" fill="#bdbdbd"/></g>
<path d="M1902 145L1908 139L1914 145" fill="none" stroke="#d0d0d0" stroke-width="2.300"/>
<rect x="1898.500" y="153.500" width="21" height="21" fill="#fff" stroke="#888"/>
<path d="M1899 154L1919 174M1919 154L1899 174" stroke="#222"/>
<rect x="1899" y="175" width="20" height="712" fill="#9a9a9a"/>
<g>
<rect x="1899" y="175" width="20" height="20" fill="#161817"/>
<rect x="1899" y="196" width="20" height="20" fill="#333333"/>
<rect x="1899" y="217" width="20" height="20" fill="#4a4a4a"/>
<rect x="1899" y="238" width="20" height="20" fill="#616161"/>
<rect x="1899" y="259" width="20" height="20" fill="#7a7a7a"/>
<rect x="1899" y="280" width="20" height="20" fill="#8e8e8e"/>
<rect x="1899" y="300.500" width="20" height="20" fill="#a6a6a6"/>
<rect x="1899" y="321" width="20" height="20" fill="#bdbdbd"/>
<rect x="1899" y="342" width="20" height="20" fill="#d2d2d2"/>
<rect x="1899" y="363" width="20" height="20" fill="#e8e8e8"/>
<rect x="1899" y="384" width="20" height="20" fill="#ffffff"/>
<rect x="1899" y="405" width="20" height="20" fill="#3a2a96"/>
<rect x="1899" y="426" width="20" height="20" fill="#00a0d8"/>
<rect x="1899" y="447" width="20" height="20" fill="#00a65a"/>
<rect x="1899" y="468" width="20" height="20" fill="#f8de10"/>
<rect x="1899" y="489" width="20" height="20" fill="#e02a20"/>
<rect x="1899" y="510" width="20" height="20" fill="#e5058a"/>
<rect x="1899" y="531" width="20" height="20" fill="#ad4690"/>
<rect x="1899" y="552" width="20" height="20" fill="#f58200"/>
<rect x="1899" y="573" width="20" height="20" fill="#ffb9bf"/>
<rect x="1899" y="594" width="20" height="20" fill="#7a6a60"/>
<rect x="1899" y="615" width="20" height="20" fill="#d6d2f0"/>
<rect x="1899" y="636" width="20" height="20" fill="#b0a2de"/>
<rect x="1899" y="657" width="20" height="20" fill="#7a94d4"/>
<rect x="1899" y="678" width="20" height="20" fill="#8a6fc0"/>
<rect x="1899" y="699" width="20" height="20" fill="#928aae"/>
<rect x="1899" y="720" width="20" height="20" fill="#4d6088"/>
<rect x="1899" y="741" width="20" height="20" fill="#544a66"/>
<rect x="1899" y="762" width="20" height="20" fill="#708198"/>
<rect x="1899" y="783" width="20" height="20" fill="#0092ca"/>
<rect x="1899" y="804" width="20" height="20" fill="#abdcf0"/>
<rect x="1899" y="825" width="20" height="20" fill="#b4c6d2"/>
<rect x="1899" y="846" width="20" height="20" fill="#95a5ac"/>
<rect x="1899" y="867" width="20" height="20" fill="#6c757c"/>
</g>
<path d="M1902 892L1908 898L1914 892" fill="none" stroke="#c8c8c8" stroke-width="2.300"/>
<path d="M1904 914L1909 918.500L1904 923M1909 914L1914 918.500L1909 923" fill="none" stroke="#c0c0c0" stroke-width="1.400"/>
</svg>
</body></html>
